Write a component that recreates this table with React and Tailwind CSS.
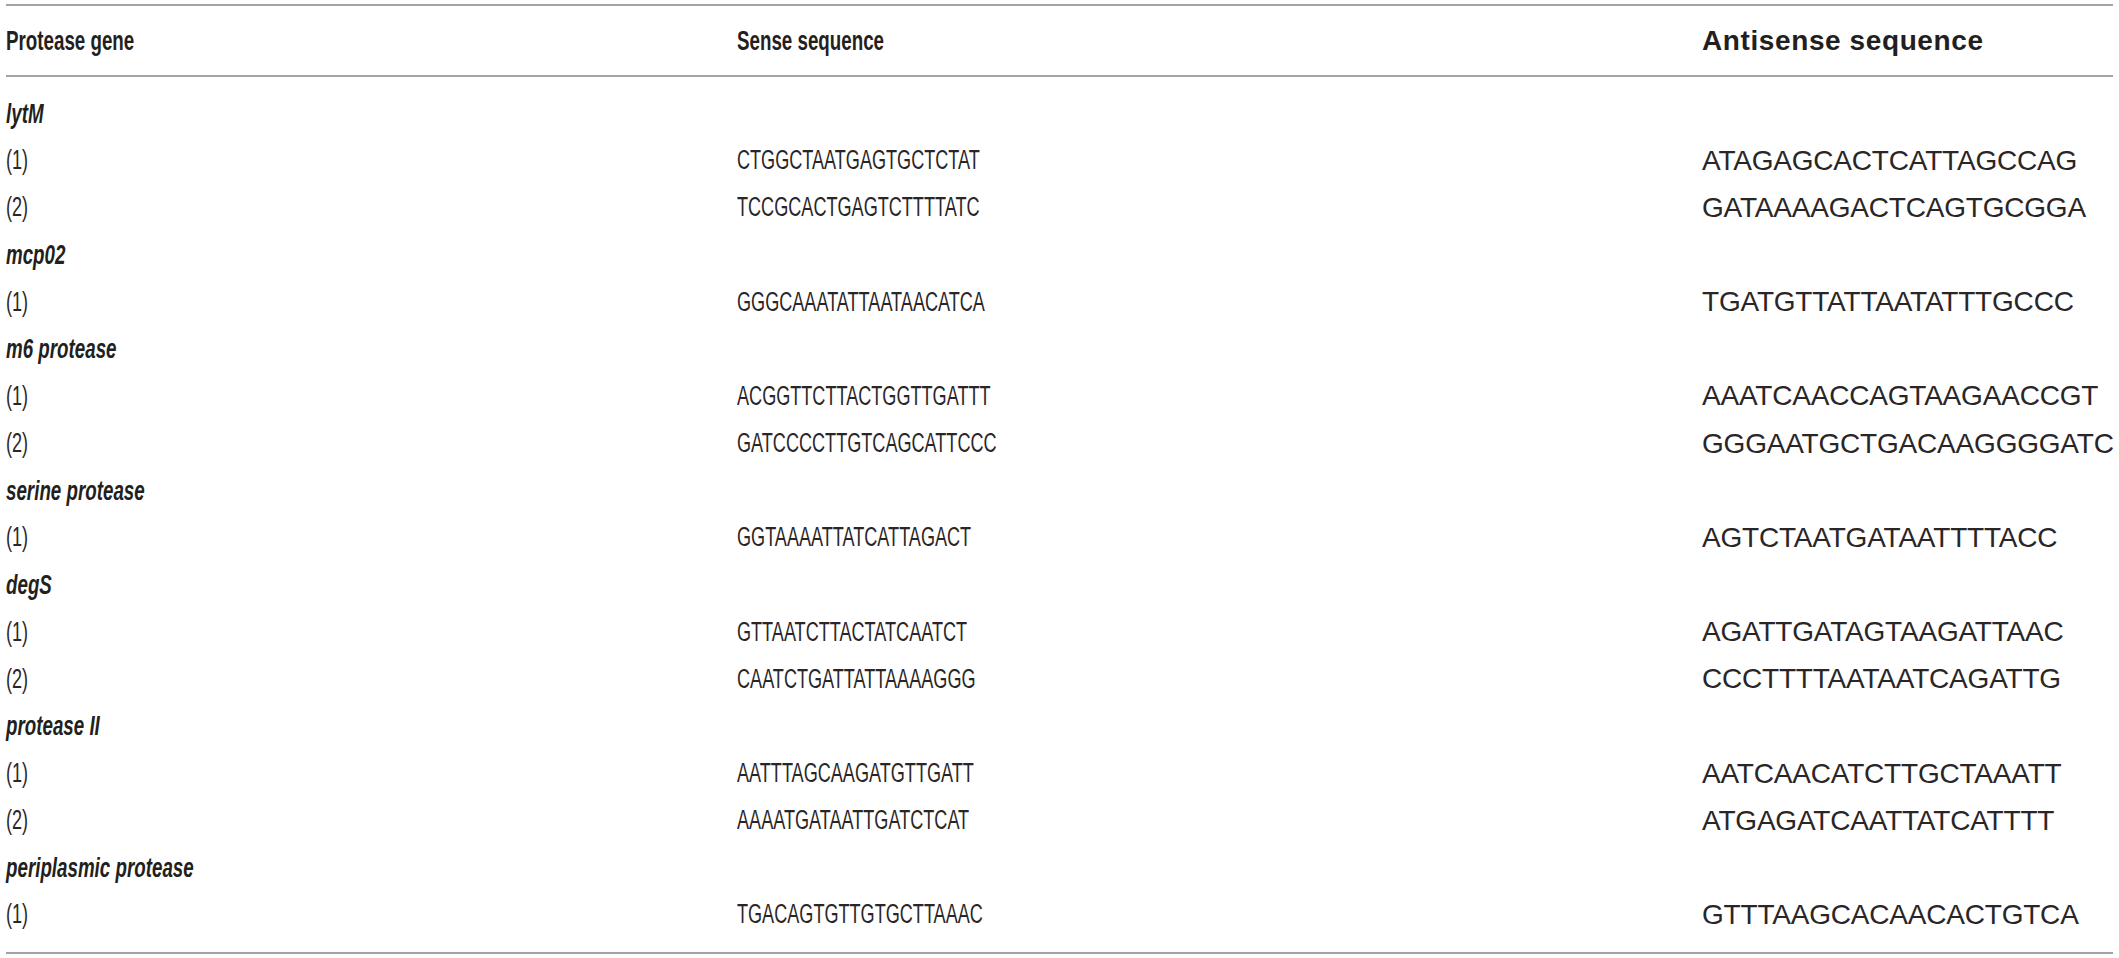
import React from "react";

const rows = [
  { g: "lytM" },
  { n: "(1)", s: "CTGGCTAATGAGTGCTCTAT", a: "ATAGAGCACTCATTAGCCAG" },
  { n: "(2)", s: "TCCGCACTGAGTCTTTTATC", a: "GATAAAAGACTCAGTGCGGA" },
  { g: "mcp02" },
  { n: "(1)", s: "GGGCAAATATTAATAACATCA", a: "TGATGTTATTAATATTTGCCC" },
  { g: "m6 protease" },
  { n: "(1)", s: "ACGGTTCTTACTGGTTGATTT", a: "AAATCAACCAGTAAGAACCGT" },
  { n: "(2)", s: "GATCCCCTTGTCAGCATTCCC", a: "GGGAATGCTGACAAGGGGATC" },
  { g: "serine protease" },
  { n: "(1)", s: "GGTAAAATTATCATTAGACT", a: "AGTCTAATGATAATTTTACC" },
  { g: "degS" },
  { n: "(1)", s: "GTTAATCTTACTATCAATCT", a: "AGATTGATAGTAAGATTAAC" },
  { n: "(2)", s: "CAATCTGATTATTAAAAGGG", a: "CCCTTTTAATAATCAGATTG" },
  { g: "protease II" },
  { n: "(1)", s: "AATTTAGCAAGATGTTGATT", a: "AATCAACATCTTGCTAAATT" },
  { n: "(2)", s: "AAAATGATAATTGATCTCAT", a: "ATGAGATCAATTATCATTTT" },
  { g: "periplasmic protease" },
  { n: "(1)", s: "TGACAGTGTTGTGCTTAAAC", a: "GTTTAAGCACAACACTGTCA" },
];

const Narrow = ({ children, className = "" }) => (
  <span className={`inline-block origin-left scale-x-[0.67] whitespace-nowrap ${className}`}>{children}</span>
);

export default function App() {
  return (
    <div
      className="w-[2119px] h-[958px] bg-white text-[#231f20] overflow-hidden"
      style={{ fontFamily: '"Liberation Sans", Arial, sans-serif' }}
    >
      <div className="mx-[6px] mt-[4px] border-t-2 border-b-2 border-[#a3a3a3]">
        <div className="grid grid-cols-[731px_965px_1fr] h-[71px] items-center border-b-2 border-[#a3a3a3] text-[28px] font-bold leading-none">
          <div><Narrow>Protease gene</Narrow></div>
          <div><Narrow>Sense sequence</Narrow></div>
          <div className="tracking-[0.6px]">Antisense sequence</div>
        </div>
        <div className="py-[13px]">
          {rows.map((r, i) =>
            r.g ? (
              <div key={i} className="h-[47.15px] flex items-center text-[28px] font-bold italic leading-none">
                <Narrow>{r.g}</Narrow>
              </div>
            ) : (
              <div key={i} className="grid grid-cols-[731px_965px_1fr] h-[47.15px] items-center text-[27px] leading-none text-[#2a2627]">
                <div><Narrow>{r.n}</Narrow></div>
                <div><Narrow>{r.s}</Narrow></div>
                <div className="whitespace-nowrap text-[28px] tracking-[-0.2px]">{r.a}</div>
              </div>
            )
          )}
        </div>
      </div>
    </div>
  );
}
